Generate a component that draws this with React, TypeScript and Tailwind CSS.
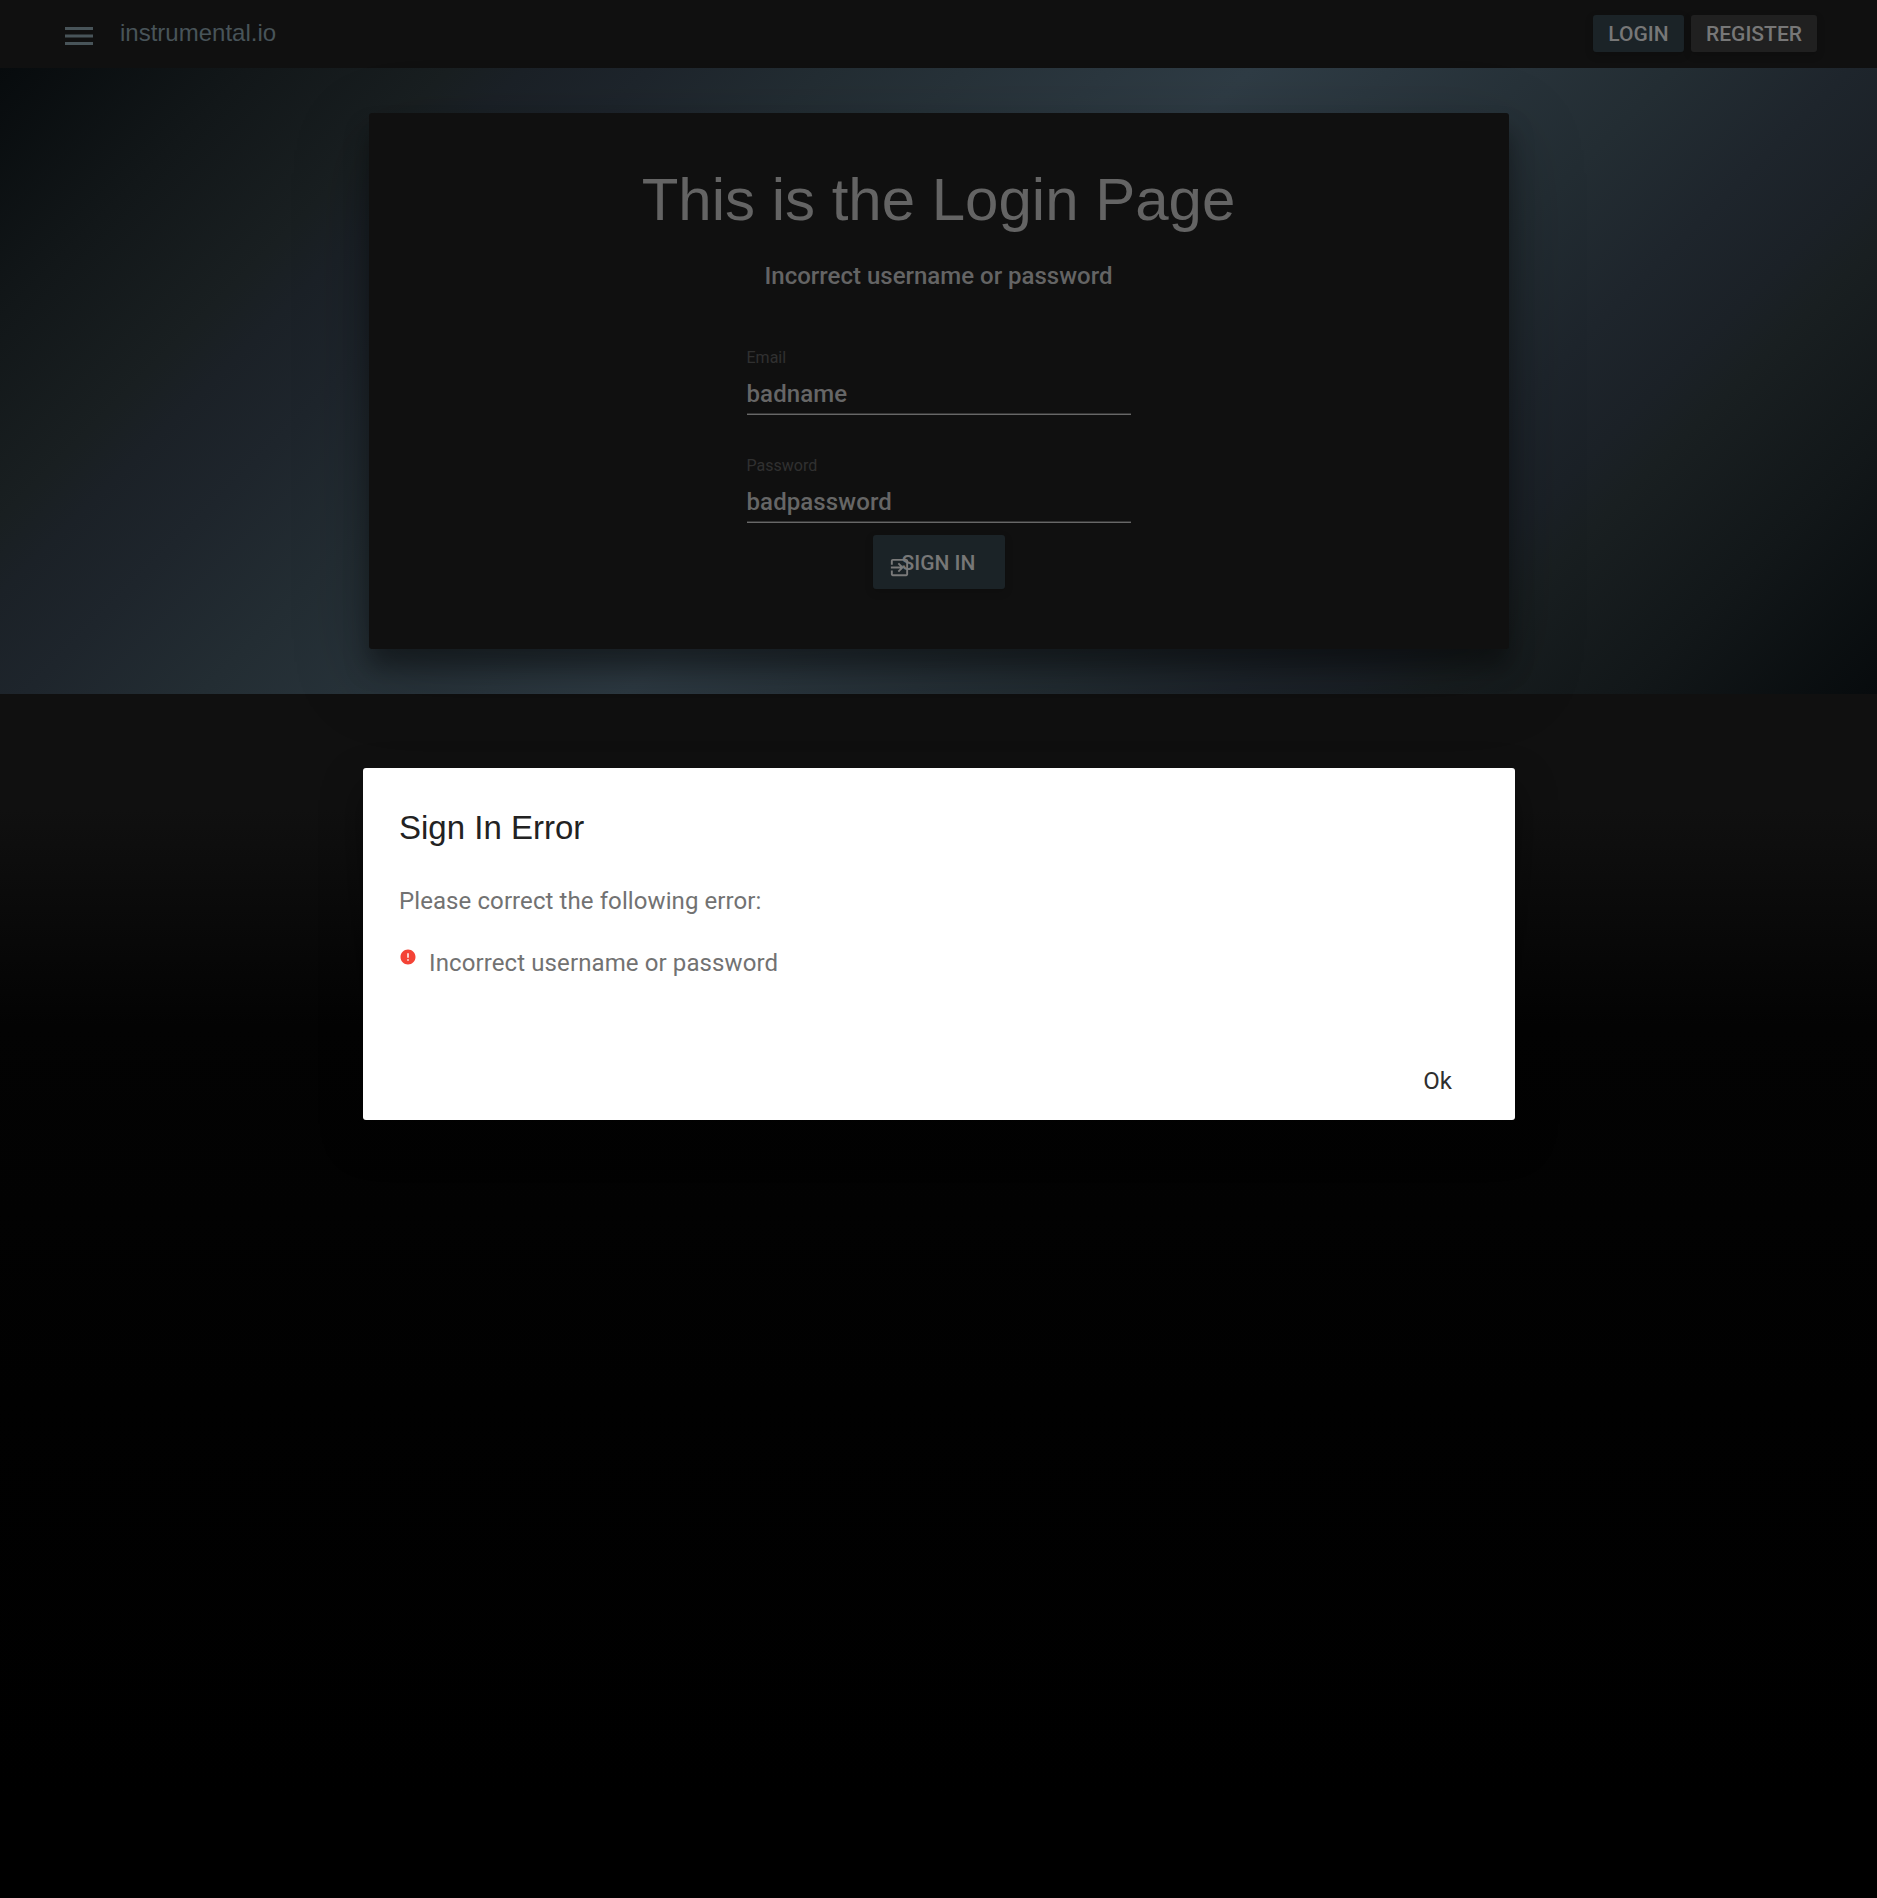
import React from "react";

const Bars = () => (
  <svg className="h-[18px] w-7" viewBox="0 0 28 18" fill="#485459">
    <path d="M0 0h28v3H0zM0 7.5h28v3H0zM0 15h28v3H0z" />
  </svg>
);

const Field = ({ label, value }: { label: string; value: string }) => (
  <div className="h-[108px] w-[384px]">
    <div className="h-[27px] text-[16px] leading-[27px] font-normal text-[#303030]">{label}</div>
    <div className="h-[44px] border-b border-[#686868] pt-[5px] text-[24px] leading-[36px] tracking-[0.1px] text-[#666] shadow-[inset_0_-1px_0_#363636]">
      {value}
    </div>
  </div>
);

export default function App() {
  return (
    <div className="relative h-[1898px] w-full overflow-hidden bg-[linear-gradient(180deg,#101010_0px,#101010_810px,#030303_1025px,#010101_1400px,#000_1800px)] font-['Roboto',sans-serif] font-medium">
      <header className="flex h-[68px] items-start justify-between bg-[#101010] pr-[60px] pl-[65px]">
        <div className="flex items-start gap-[27px]">
          <div className="pt-[27px]">
            <Bars />
          </div>
          <span className="pt-[15px] font-['Liberation_Sans',sans-serif] text-[24px] leading-[36px] font-normal text-[#485459]">
            instrumental.io
          </span>
        </div>
        <div className="flex gap-[7px] pt-[15px] text-[21px] leading-[38px] text-[#777]">
          <button className="h-[37px] w-[91px] rounded-[3px] bg-[#1b2327] text-center shadow-[0_3px_8px_rgba(0,0,0,0.16)]">LOGIN</button>
          <button className="h-[37px] w-[126px] rounded-[3px] bg-[#202020] text-center shadow-[0_3px_8px_rgba(0,0,0,0.16)]">REGISTER</button>
        </div>
      </header>
      <section className="flex h-[626px] justify-center bg-[linear-gradient(135deg,#070b0d_0%,#121719_10%,#191f21_18%,#1b2127_21%,#1e252c_26%,#232d33_33%,#2f3c45_50%,#232d33_67%,#1e252c_74%,#1b2127_79%,#191f21_82%,#121719_90%,#070b0d_100%)] pt-[45px]">
        <div className="flex h-[536px] w-[1140px] flex-col items-center rounded-[3px] bg-[#101010] shadow-[0_18px_23px_rgba(0,0,0,0.35),0_25px_75px_rgba(0,0,0,0.25)]">
          <h1 className="mt-[51px] font-['Liberation_Sans',sans-serif] text-[60px] leading-[72px] font-normal text-[#646464]">
            This is the Login Page
          </h1>
          <p className="mt-[22px] h-[36px] text-[24px] leading-[36px] text-[#646464]">Incorrect username or password</p>
          <div className="mt-[50px]">
            <Field label="Email" value="badname" />
            <Field label="Password" value="badpassword" />
          </div>
          <button className="relative -mt-[25px] h-[54px] w-[132px] rounded-[3px] bg-[#1b2327] text-center text-[21px] leading-[56px] text-[#777] shadow-[0_3px_8px_rgba(0,0,0,0.16)]">
            <svg className="absolute top-[21px] left-[15px] h-[23px] w-[23px]" viewBox="0 0 24 24" fill="#7a7a7a">
              <path d="M10.09 15.59L11.5 17l5-5-5-5-1.41 1.41L12.67 11H3v2h9.67l-2.58 2.59zM19 3H5c-1.11 0-2 .9-2 2v4h2V5h14v14H5v-4H3v4c0 1.1.89 2 2 2h14c1.1 0 2-.9 2-2V5c0-1.1-.9-2-2-2z" />
            </svg>
            SIGN IN
          </button>
        </div>
      </section>
      <div
        role="dialog"
        className="absolute top-[768px] left-[363px] h-[352px] w-[1152px] rounded-[3px] bg-white px-9 font-normal text-[#727272] shadow-[0_18px_40px_rgba(0,0,0,0.4)]"
      >
        <h4 className="pt-[36px] font-['Liberation_Sans',sans-serif] text-[33px] leading-[48px] text-[#222]">Sign In Error</h4>
        <p className="mt-[31px] text-[24px] leading-[36px] tracking-[0.09px]">Please correct the following error:</p>
        <div className="mt-[26px] flex items-start gap-[12px]">
          <svg className="mt-[2.5px] h-[18px] w-[18px]" viewBox="0 0 24 24" fill="#f44336">
            <path d="M12 2C6.48 2 2 6.48 2 12s4.48 10 10 10 10-4.48 10-10S17.52 2 12 2zm1 15h-2v-2h2v2zm0-4h-2V7h2v6z" />
          </svg>
          <p className="text-[24px] leading-[36px] tracking-[0.11px]">Incorrect username or password</p>
        </div>
        <div className="mt-[82px] flex justify-end pr-[27px]">
          <button className="text-[24px] leading-[36px] text-[#2e2e2e]">Ok</button>
        </div>
      </div>
    </div>
  );
}
